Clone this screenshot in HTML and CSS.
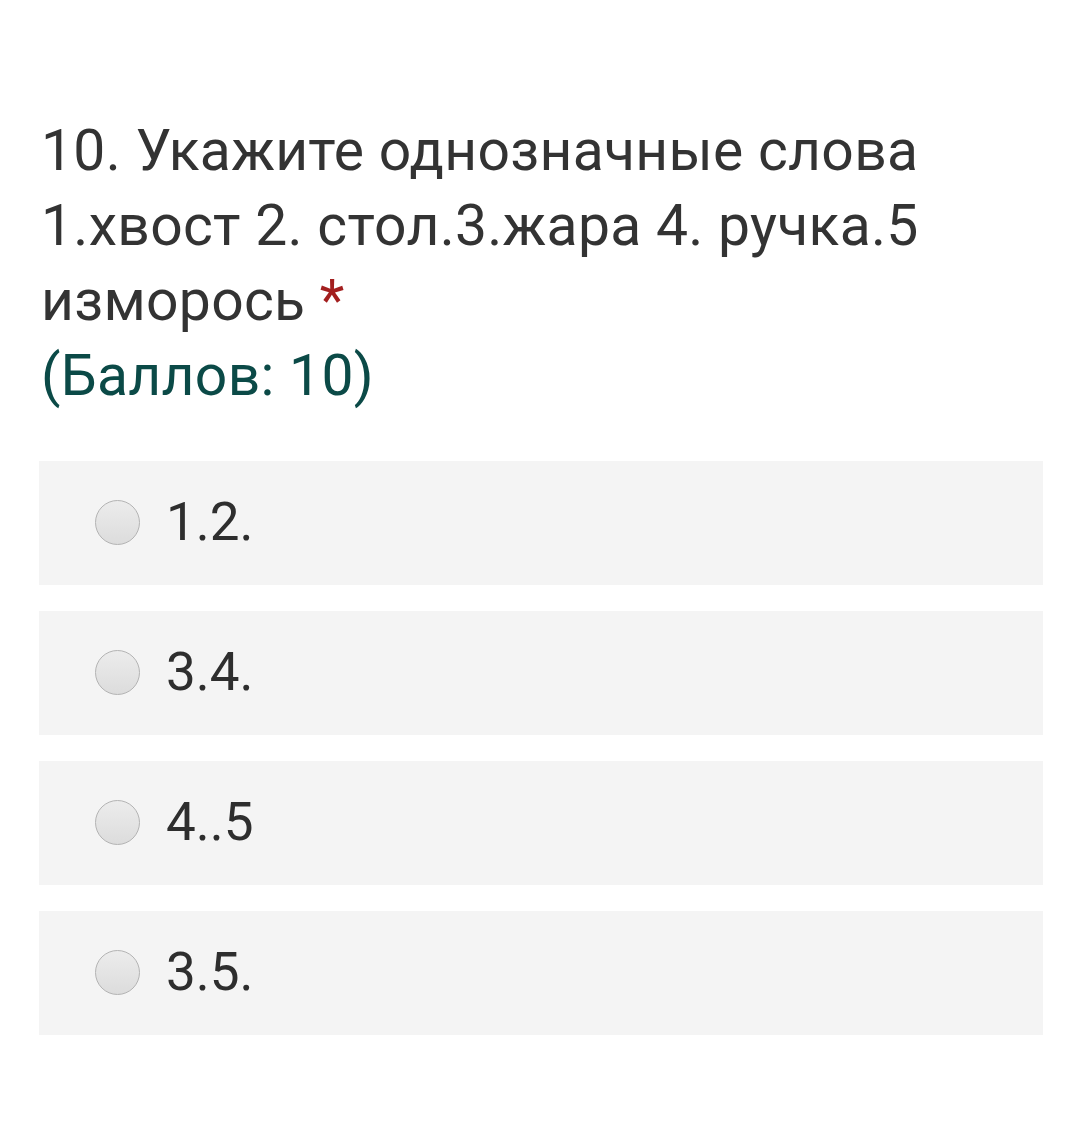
FILE: index.html
```html
<!DOCTYPE html>
<html lang="ru">
<head>
<meta charset="utf-8">
<link rel="stylesheet" href="styles.css">
</head>
<body>
<div class="page">
  <div class="question">
    <div class="title">10. Укажите однозначные слова 1.хвост 2. стол.3.жара 4. ручка.5 изморось <span class="req">*</span></div>
    <div class="points">(Баллов: 10)</div>
  </div>
  <div class="options">
    <label class="option"><span class="radio"></span><span class="label">1.2.</span></label>
    <label class="option"><span class="radio"></span><span class="label">3.4.</span></label>
    <label class="option"><span class="radio"></span><span class="label">4..5</span></label>
    <label class="option"><span class="radio"></span><span class="label">3.5.</span></label>
  </div>
</div>
</body>
</html>
```
FILE: styles.css
```css
html, body {
  margin: 0;
  padding: 0;
  background: #ffffff;
}
.page {
  font-family: Roboto, "Noto Sans", sans-serif;
  padding: 113px 23px 0 39px;
  box-sizing: border-box;
  width: 1066px;
}
.question {
  font-size: 57px;
  line-height: 75px;
  letter-spacing: 0.3px;
  color: #333333;
  padding-left: 2px;
  padding-right: 100px;
}
.req {
  color: #a31f1f;
}
.points {
  color: #0b4a47;
}
.options {
  margin-top: 48px;
  display: flex;
  flex-direction: column;
  gap: 26.5px;
}
.option {
  display: flex;
  align-items: center;
  height: 123.5px;
  background: #f4f4f4;
  padding-left: 56px;
  box-sizing: border-box;
}
.radio {
  width: 45px;
  height: 45px;
  border-radius: 50%;
  box-sizing: border-box;
  border: 1.5px solid #b3b3b3;
  background: linear-gradient(#ececec, #dcdcdc);
  flex: none;
}
.label {
  margin-left: 26px;
  font-size: 53px;
  color: #2e2e2e;
  line-height: 1;
}
```
